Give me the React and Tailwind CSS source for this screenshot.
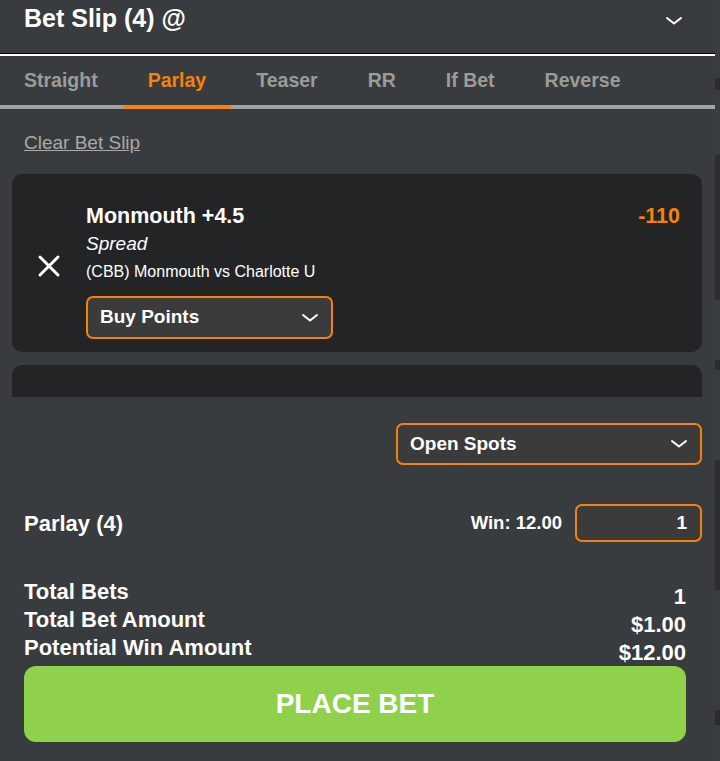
import React from 'react';

const font = { fontFamily: '"Liberation Sans", Arial, sans-serif' };

function Chevron({ className = '' }) {
	return (
		<svg width="18" height="10" viewBox="0 0 18 10" className={className} fill="none">
			<path d="M2 2l7 5.5L16 2" stroke="white" strokeWidth="2" strokeLinecap="round" strokeLinejoin="round" />
		</svg>
	);
}

function Select({ label, className = '' }) {
	return (
		<div className={`flex items-center justify-between border-2 border-[#f5820a] rounded-[7px] bg-[#3b3b3b] pl-[12px] pr-[12px] ${className}`}>
			<span className="text-white font-bold text-[19px]">{label}</span>
			<Chevron />
		</div>
	);
}

export default function App() {
	return (
		<div className="w-[720px] h-[761px] overflow-hidden flex bg-[#393c3e]" style={font}>
			<div className="w-[715px] flex flex-col">
				{/* header */}
				<div className="h-[53px] flex items-start justify-between pl-[24px] pr-[32px] pt-[3px]">
					<h1 className="text-white font-bold text-[25px] leading-[30px]">Bet Slip (4) @</h1>
					<Chevron className="mt-[13px]" />
				</div>
				<div className="h-px bg-black" />
				<div className="h-[2px] bg-white" />

				{/* tabs */}
				<div className="h-[49px] flex items-center text-[19.5px] font-bold text-[#9b9b9b]">
					<span className="ml-[24px]">Straight</span>
					<span className="ml-[50px] text-[#f5820a]">Parlay</span>
					<span className="ml-[50px]">Teaser</span>
					<span className="ml-[50px]">RR</span>
					<span className="ml-[50px]">If Bet</span>
					<span className="ml-[50px]">Reverse</span>
				</div>
				<div className="h-[4px] bg-[#a3a3a3] flex">
					<div className="ml-[124px] w-[107px] bg-[#f5820a]" />
				</div>

				{/* scroll area */}
				<div className="h-[288px] overflow-hidden flex flex-col">
					<a className="mt-[23px] ml-[24px] text-[19px] text-[#a9a9a9] underline leading-[22px] w-fit">Clear Bet Slip</a>
					<div className="mt-[20px] mx-[12px] w-[690px] h-[178px] shrink-0 rounded-[10px] bg-[#232426] flex">
						<div className="w-[74px] flex items-start justify-center pt-[80px]">
							<svg width="24" height="24" viewBox="0 0 24 24">
								<path d="M3 3l18 18M21 3L3 21" stroke="white" strokeWidth="3" strokeLinecap="round" />
							</svg>
						</div>
						<div className="flex-1 flex flex-col pt-[29px] pr-[22px]">
							<div className="flex justify-between items-center">
								<span className="text-white font-bold text-[21.5px] leading-[26px]">Monmouth +4.5</span>
								<span className="text-[#f5820a] font-bold text-[21.5px] leading-[26px]">-110</span>
							</div>
							<span className="text-white italic text-[19px] leading-[24px] mt-[3px]">Spread</span>
							<span className="text-white text-[16px] leading-[20px] mt-[6px]">(CBB) Monmouth vs Charlotte U</span>
							<Select label="Buy Points" className="w-[247px] h-[43px] mt-[14px]" />
						</div>
					</div>
					<div className="mt-[13px] mx-[12px] w-[690px] h-[60px] shrink-0 rounded-[10px] bg-[#232426]" />
				</div>

				<div className="flex justify-end pr-[13px] mt-[26px]">
					<Select label="Open Spots" className="w-[306px] h-[42px]" />
				</div>

				{/* parlay row */}
				<div className="flex items-center justify-between mt-[39px] pl-[24px] pr-[13px]">
					<span className="text-white font-bold text-[22px]">Parlay (4)</span>
					<div className="flex items-center">
						<span className="text-white font-bold text-[18.5px] mr-[13px]">Win: 12.00</span>
						<div className="w-[127px] h-[38px] border-2 border-[#f5820a] rounded-[7px] bg-[#3b3b3b] flex items-center justify-end pr-[13px]">
							<span className="text-white font-bold text-[19px]">1</span>
						</div>
					</div>
				</div>

				{/* totals */}
				<div className="mt-[36px] pl-[24px] pr-[29px] flex flex-col text-white font-bold text-[22px] leading-[28px]">
					<div className="flex justify-between h-[28px]"><span>Total Bets</span><span className="translate-y-[5px]">1</span></div>
					<div className="flex justify-between h-[28px]"><span>Total Bet Amount</span><span className="translate-y-[5px]">$1.00</span></div>
					<div className="flex justify-between h-[28px]"><span>Potential Win Amount</span><span className="translate-y-[5px]">$12.00</span></div>
				</div>

				<button className="mt-[4px] ml-[24px] w-[662px] h-[76px] rounded-[12px] bg-[#8fd14a] text-white font-bold text-[28px] shrink-0">
					PLACE BET
				</button>
			</div>

			{/* page behind */}
			<div className="w-[5px] flex flex-col bg-[#3a3d3f]">
				<div className="mt-[78px] h-[12px] bg-[#2a2c2e]" />
				<div className="mt-[65px] h-[145px] bg-[#2c2e30]" />
				<div className="mt-[60px] h-[10px] bg-[#2a2c2e]" />
				<div className="mt-[90px] h-[130px] bg-[#2c2e30]" />
				<div className="mt-[120px] h-[15px] bg-[#2a2c2e]" />
			</div>
		</div>
	);
}
